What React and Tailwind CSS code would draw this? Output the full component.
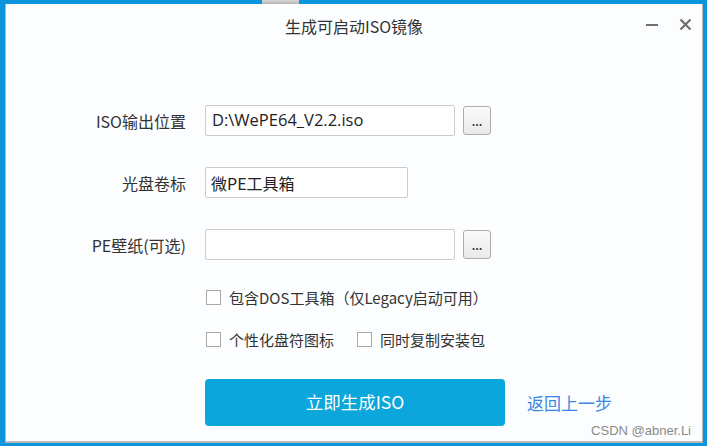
function BrowseButton() {
  return (
    <button className="ml-2 flex h-[29px] w-[28px] items-end justify-center rounded-[3px] border border-[#adadad] bg-gradient-to-b from-[#fbfbfb] to-[#e9e9e9] pb-[7px] text-[11px] font-bold leading-none text-[#2a3a5a]">
      ...
    </button>
  );
}

function CheckItem({ label }) {
  return (
    <label className="flex h-[20px] items-center gap-[8px]">
      <span className="h-[15px] w-[15px] border border-[#a9a9a9] bg-white" />
      <span className="text-[15px] leading-none text-[#333]">{label}</span>
    </label>
  );
}

export default function App() {
  return (
    <div
      className="relative h-[446px] w-[707px] overflow-hidden bg-[#0c95dd] pl-[5px] pr-[4px] pt-[4px] pb-[3px]"
      style={{ fontFamily: '"Noto Sans CJK SC", "Noto Sans", sans-serif' }}
    >
      <div className="absolute left-[262px] top-0 h-[4px] w-[37px] bg-gradient-to-b from-[#d8d8d8] to-[#b5b5b5]" />

      <div className="flex h-full flex-col border-x border-b-2 border-[#b9b9b9] border-t-0 bg-[#fbfdfe]">
        {/* title bar */}
        <div className="relative flex h-[40px] items-center justify-center pt-[4px]">
          <span className="text-[16px] leading-none text-[#333]">生成可启动ISO镜像</span>
          <div className="absolute right-[10px] top-[14px] flex items-center gap-[21px]">
            <span className="mt-[1px] block h-[2px] w-[12px] bg-[#6e6e6e]" />
            <svg width="13" height="13" viewBox="0 0 13 13">
              <path d="M1.5 1.5 L11.5 11.5 M11.5 1.5 L1.5 11.5" stroke="#6e6e6e" strokeWidth="2.2" />
            </svg>
          </div>
        </div>

        {/* form */}
        <div className="mt-[61px] grid grid-cols-[180px_1fr] items-center gap-x-[19px] gap-y-[31px]">
          <span className="text-right text-[16px] leading-none text-[#333]">ISO输出位置</span>
          <div className="flex h-[31px] items-center">
            <div
              className="flex h-[31px] w-[250px] items-center rounded-[2px] border border-[#cbcbcb] bg-white px-[6px] text-[16.5px] text-[#222]"
              style={{ fontFamily: '"Open Sans", "Noto Sans CJK SC", sans-serif' }}
            >
              D:\WePE64_V2.2.iso
            </div>
            <BrowseButton />
          </div>

          <span className="text-right text-[16px] leading-none text-[#333]">光盘卷标</span>
          <div className="flex h-[31px] w-[203px] items-center rounded-[2px] border border-[#cbcbcb] bg-white px-[5px] text-[16px] text-[#222]">
            微PE工具箱
          </div>

          <span className="text-right text-[16px] leading-none text-[#333]">PE壁纸(可选)</span>
          <div className="flex h-[31px] items-center">
            <div className="h-[31px] w-[250px] rounded-[2px] border border-[#cbcbcb] bg-white" />
            <BrowseButton />
          </div>
        </div>

        <div className="ml-[200px] mt-[27px] flex flex-col gap-[22px]">
          <CheckItem label="包含DOS工具箱（仅Legacy启动可用）" />
          <div className="flex items-center gap-[23px]">
            <CheckItem label="个性化盘符图标" />
            <CheckItem label="同时复制安装包" />
          </div>
        </div>

        <div className="ml-[199px] mt-[30px] flex items-center">
          <button className="flex h-[47px] w-[300px] items-center justify-center rounded-[4px] bg-[#0aa6dc] text-[17.5px] text-white">
            立即生成ISO
          </button>
          <a className="ml-[22px] text-[17px] text-[#3a86e4]">返回上一步</a>
        </div>
      </div>

      <span
        className="absolute bottom-[6px] right-[16px] text-[13px] text-[#8a8a8a]"
        style={{ fontFamily: '"Liberation Sans", Arial, sans-serif' }}
      >
        CSDN @abner.Li
      </span>
    </div>
  );
}
